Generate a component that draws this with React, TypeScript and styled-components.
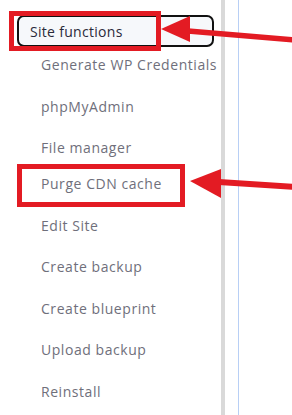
import React from "react";
import styled, { createGlobalStyle } from "styled-components";

const GlobalStyle = createGlobalStyle`
  html, body {
    margin: 0;
    padding: 0;
    background: #ffffff;
  }
  body {
    font-family: "Open Sans", "Liberation Sans", sans-serif;
  }
`;

const items = [
  { label: "Generate WP Credentials" },
  { label: "phpMyAdmin" },
  { label: "File manager" },
  { label: "Purge CDN cache", pull: true },
  { label: "Edit Site" },
  { label: "Create backup" },
  { label: "Create blueprint" },
  { label: "Upload backup" },
  { label: "Reinstall" },
];

const App = () => {
  return (
    <>
      <GlobalStyle />
      <Page>
        <Sidebar>
          <SectionButton>Site functions</SectionButton>
          <Menu>
            {items.map((item) => (
              <MenuItem key={item.label} $pull={item.pull}>
                {item.label}
              </MenuItem>
            ))}
          </Menu>
        </Sidebar>
        <Divider />
        <Content />

        {/* annotations drawn over the screenshot */}
        <Highlight $x={9} $y={11} $w={152} $h={40} />
        <Highlight $x={17} $y={164} $w={168} $h={43} />
        <Arrows width="292" height="415" viewBox="0 0 292 415">
          <line x1="188" y1="31" x2="296" y2="40" stroke="#e31b23" strokeWidth="5.5" />
          <polygon points="161,29 190,16 190,42" fill="#e31b23" />
          <line x1="219" y1="182" x2="296" y2="187" stroke="#e31b23" strokeWidth="6" />
          <polygon points="190,181 221,169 221,198" fill="#e31b23" />
        </Arrows>
      </Page>
    </>
  );
};

export default App;

const Page = styled.div`
  position: relative;
  display: flex;
  flex-direction: row;
  width: 292px;
  height: 415px;
  overflow: hidden;
`;

const Sidebar = styled.div`
  display: flex;
  flex-direction: column;
  width: 221px;
  padding: 15px 0 0 17px;
  box-sizing: border-box;
`;

const SectionButton = styled.div`
  display: flex;
  align-items: center;
  width: 197px;
  height: 32px;
  padding-left: 11px;
  box-sizing: border-box;

  background-color: #f6f8fb;
  border: 2px solid #111111;
  border-radius: 7px;

  color: #2a2a3a;
  font-size: 14px;
  letter-spacing: 0.3px;
`;

const Menu = styled.div`
  display: flex;
  flex-direction: column;
  margin-top: -3px;
  padding-left: 24px;
`;

const MenuItem = styled.div<{ $pull?: boolean }>`
  display: flex;
  align-items: center;
  height: 41.5px;
  margin-top: ${({ $pull }) => ($pull ? "-5.5px" : "0")};

  color: #6f6f7b;
  font-size: 14px;
  letter-spacing: 0.55px;
  white-space: nowrap;
`;

const Divider = styled.div`
  width: 3.5px;
  align-self: stretch;
  background-color: #d9d9d9;
`;

const Content = styled.div`
  flex: 1;
  margin-left: 13px;
  border-left: 1px solid #b8cff5;
`;

const Highlight = styled.div<{ $x: number; $y: number; $w: number; $h: number }>`
  position: absolute;
  left: ${({ $x }) => $x}px;
  top: ${({ $y }) => $y}px;
  width: ${({ $w }) => $w}px;
  height: ${({ $h }) => $h}px;
  box-sizing: border-box;
  border: 5px solid #e31b23;
`;

const Arrows = styled.svg`
  position: absolute;
  left: 0;
  top: 0;
  pointer-events: none;
`;
